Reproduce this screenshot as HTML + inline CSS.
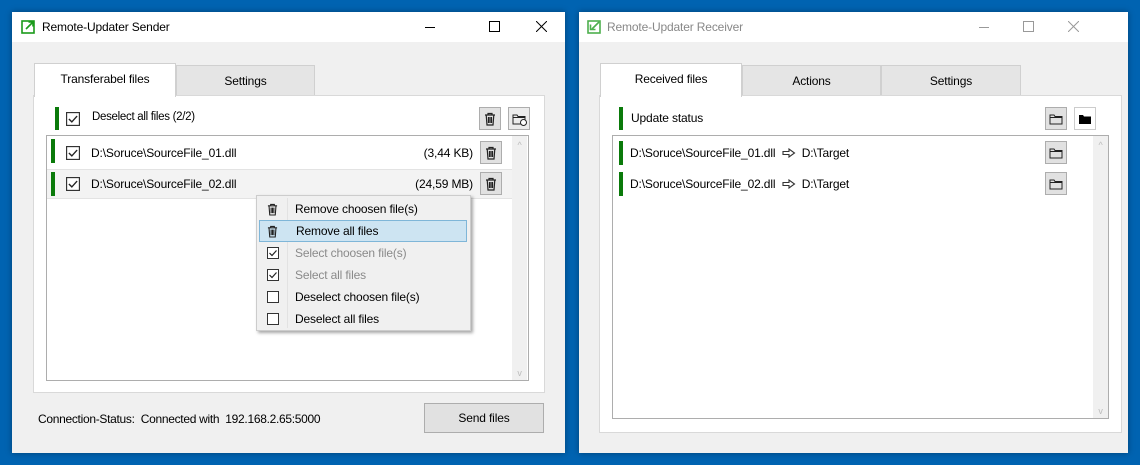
<!DOCTYPE html>
<html><head><meta charset="utf-8"><style>
*{margin:0;padding:0;box-sizing:border-box}
body{width:1140px;height:465px;background:#0063b1;position:relative;overflow:hidden;font-family:"Liberation Sans",sans-serif;font-size:12px;color:#000;letter-spacing:-0.15px}
.a{position:absolute}
.win{position:absolute;background:#f0f0f0;box-shadow:0 0 6px rgba(0,0,0,.35)}
.tb{position:absolute;left:0;top:0;right:0;height:30px;background:#fff}
.tab{position:absolute;border:1px solid #d0d0d0;text-align:center;line-height:30px;font-size:12px}
.panel{position:absolute;background:#fff;border:1px solid #d9d9d9}
.list{position:absolute;background:#fff;border:1px solid #adadad}
.gb{position:absolute;width:4px;background:#0a7a0a}
.btn{position:absolute;width:22px;height:23px;background:#e1e1e1;border:1px solid #adadad}
.sb{position:absolute;width:15px;background:#f0f0f0;color:#bbb;font-size:9px;text-align:center}
.mi{position:absolute;left:2px;width:208px;height:22px;line-height:22px;padding-left:36px;font-size:12px}
.mi .ic{position:absolute;left:8px;top:5px}
</style></head><body>
<svg width="0" height="0" style="position:absolute"><defs>
<symbol id="trash" viewBox="0 0 12 14"><path d="M1 3h10M4 3V1.5h4V3M2.2 3l.8 10h6l.8-10M4.5 5v6M6 5v6M7.5 5v6" fill="none" stroke="#222" stroke-width="1.2"/></symbol>
<symbol id="fold" viewBox="0 0 14 12"><path d="M1 2h4l1 1.5h7V11H1z" fill="none" stroke="#222" stroke-width="1"/><path d="M1 4.5h12" stroke="#222" stroke-width="1"/></symbol>
<symbol id="foldf" viewBox="0 0 14 12"><path d="M1 2h4l1 1.5h7V11H1z" fill="#000"/></symbol>
<symbol id="cbx" viewBox="0 0 12 12"><rect x=".5" y=".5" width="11" height="11" fill="#fff" stroke="#333"/></symbol>
<symbol id="cbc" viewBox="0 0 12 12"><rect x=".5" y=".5" width="11" height="11" fill="#fff" stroke="#333"/><path d="M2.5 6l2.5 2.5 4.5-5" fill="none" stroke="#222" stroke-width="1.2"/></symbol>
<symbol id="arr" viewBox="0 0 14 10"><path d="M1 3.5h6V1l5.5 4L7 9V6.5H1z" fill="#fff" stroke="#333" stroke-width="1.1"/></symbol>
</defs></svg>

<!-- LEFT WINDOW -->
<div class="win" style="left:12px;top:12px;width:553px;height:441px">
 <div class="tb">
  <svg class="a" style="left:9px;top:8px" width="14" height="14" viewBox="0 0 14 14"><rect x="1" y="1" width="12" height="12" fill="none" stroke="#1a9a1a" stroke-width="1.6"/><path d="M5 9L12 2M7.5 2H12V6.5" fill="none" stroke="#1a9a1a" stroke-width="1.6"/></svg>
  <div class="a" style="left:30px;top:8px;font-size:12px">Remote-Updater Sender</div>
  <div class="a" style="left:413px;top:15px;width:10px;height:1px;background:#000"></div>
  <div class="a" style="left:477px;top:9px;width:11px;height:11px;border:1px solid #000"></div>
  <svg class="a" style="left:524px;top:9px" width="11" height="11"><path d="M0 0L11 11M11 0L0 11" stroke="#000" stroke-width="1"/></svg>
 </div>
 <div class="tab" style="left:22px;top:51px;width:142px;height:34px;background:#fff;border-bottom:none;z-index:2">Transferabel files</div>
 <div class="tab" style="left:164px;top:53px;width:139px;height:31px;background:#e5e5e5">Settings</div>
 <div class="panel" style="left:21px;top:83px;width:512px;height:298px"></div>
 <div class="gb" style="left:43px;top:95px;height:23px"></div>
 <svg class="a" style="left:54px;top:100px" width="14" height="14"><use href="#cbc"/></svg>
 <div class="a" style="left:80px;top:99px;font-size:11.5px;letter-spacing:-0.3px">Deselect all files (2/2)</div>
 <div class="btn" style="left:467px;top:95px"><svg class="a" style="left:4px;top:4px" width="12" height="14"><use href="#trash"/></svg></div>
 <div class="btn" style="left:496px;top:95px;background:#ececec"><svg class="a" style="left:3px;top:5px" width="14" height="12"><use href="#fold"/></svg><div class="a" style="left:11px;top:11px;width:7px;height:7px;border:1px solid #222;border-radius:50%;background:#fff"></div></div>
 <div class="list" style="left:34px;top:123px;width:483px;height:246px"></div>
 <div class="sb" style="left:500px;top:124px;height:244px"><div style="margin-top:4px">^</div><div style="position:absolute;bottom:2px;width:15px">v</div></div>
 <div class="gb" style="left:39px;top:127px;height:24px"></div>
 <svg class="a" style="left:54px;top:134px" width="14" height="14"><use href="#cbc"/></svg>
 <div class="a" style="left:79px;top:134px">D:\Soruce\SourceFile_01.dll</div>
 <div class="a" style="left:400px;top:134px;width:61px;text-align:right">(3,44 KB)</div>
 <div class="btn" style="left:468px;top:129px"><svg class="a" style="left:4px;top:4px" width="12" height="14"><use href="#trash"/></svg></div>
 <div class="a" style="left:35px;top:157px;width:465px;height:30px;background:#f3f3f3;border-top:1px solid #e3e3e3;border-bottom:1px solid #e3e3e3"></div>
 <div class="gb" style="left:39px;top:160px;height:24px"></div>
 <svg class="a" style="left:54px;top:165px" width="14" height="14"><use href="#cbc"/></svg>
 <div class="a" style="left:79px;top:165px">D:\Soruce\SourceFile_02.dll</div>
 <div class="a" style="left:390px;top:165px;width:71px;text-align:right">(24,59 MB)</div>
 <div class="btn" style="left:468px;top:160px"><svg class="a" style="left:4px;top:4px" width="12" height="14"><use href="#trash"/></svg></div>
 <div class="a" style="left:26px;top:400px;letter-spacing:-0.3px">Connection-Status:&nbsp; Connected with &nbsp;192.168.2.65:5000</div>
 <div class="a" style="left:412px;top:391px;width:120px;height:30px;background:#e1e1e1;border:1px solid #adadad;text-align:center;line-height:28px">Send files</div>
 <!-- context menu -->
 <div class="a" style="left:244px;top:183px;width:215px;height:136px;background:#f0f0f0;border:1px solid #ccc;box-shadow:2px 2px 3px rgba(0,0,0,.35)">
  <div class="a" style="left:30px;top:2px;width:1px;height:130px;background:#e2e2e2"></div>
  <div class="mi" style="top:2px"><svg class="ic" width="11" height="13"><use href="#trash"/></svg>Remove choosen file(s)</div>
  <div class="mi" style="top:24px;background:#cde4f2;border:1px solid #7fb6d8;line-height:20px"><svg class="ic" style="left:7px;top:4px" width="11" height="13"><use href="#trash"/></svg>Remove all files</div>
  <div class="mi" style="top:46px;color:#8a8a8a"><svg class="ic" width="12" height="12"><use href="#cbc"/></svg>Select choosen file(s)</div>
  <div class="mi" style="top:68px;color:#8a8a8a"><svg class="ic" width="12" height="12"><use href="#cbc"/></svg>Select all files</div>
  <div class="mi" style="top:90px"><svg class="ic" width="12" height="12"><use href="#cbx"/></svg>Deselect choosen file(s)</div>
  <div class="mi" style="top:112px"><svg class="ic" width="12" height="12"><use href="#cbx"/></svg>Deselect all files</div>
 </div>
</div>

<!-- RIGHT WINDOW -->
<div class="win" style="left:579px;top:12px;width:549px;height:441px">
 <div class="tb">
  <svg class="a" style="left:8px;top:8px" width="14" height="14" viewBox="0 0 14 14"><rect x="1" y="1" width="12" height="12" fill="none" stroke="#4caf4c" stroke-width="1.6"/><path d="M12 2L5 9M3.5 4.5V9.5H8.5" fill="none" stroke="#4caf4c" stroke-width="1.6"/></svg>
  <div class="a" style="left:28px;top:8px;color:#888">Remote-Updater Receiver</div>
  <div class="a" style="left:400px;top:15px;width:10px;height:1px;background:#999"></div>
  <div class="a" style="left:444px;top:9px;width:11px;height:11px;border:1px solid #999"></div>
  <svg class="a" style="left:489px;top:9px" width="11" height="11"><path d="M0 0L11 11M11 0L0 11" stroke="#999" stroke-width="1"/></svg>
 </div>
 <div class="tab" style="left:21px;top:51px;width:142px;height:34px;background:#fff;border-bottom:none;z-index:2">Received files</div>
 <div class="tab" style="left:163px;top:53px;width:139px;height:31px;background:#e5e5e5">Actions</div>
 <div class="tab" style="left:302px;top:53px;width:140px;height:31px;background:#e5e5e5">Settings</div>
 <div class="panel" style="left:20px;top:83px;width:523px;height:338px"></div>
 <div class="gb" style="left:40px;top:95px;height:23px"></div>
 <div class="a" style="left:52px;top:99px">Update status</div>
 <div class="btn" style="left:466px;top:95px"><svg class="a" style="left:3px;top:5px" width="14" height="12"><use href="#fold"/></svg></div>
 <div class="btn" style="left:495px;top:95px;background:#fff;border-color:#ccc"><svg class="a" style="left:3px;top:5px" width="14" height="12"><use href="#foldf"/></svg></div>
 <div class="list" style="left:33px;top:123px;width:497px;height:284px"></div>
 <div class="sb" style="left:514px;top:124px;height:282px"><div style="margin-top:4px">^</div><div style="position:absolute;bottom:2px;width:15px">v</div></div>
 <div class="gb" style="left:40px;top:129px;height:24px"></div>
 <div class="a" style="left:51px;top:134px">D:\Soruce\SourceFile_01.dll <svg width="14" height="10" style="vertical-align:-1px;margin:0 3px"><use href="#arr"/></svg> D:\Target</div>
 <div class="btn" style="left:466px;top:129px"><svg class="a" style="left:3px;top:5px" width="14" height="12"><use href="#fold"/></svg></div>
 <div class="gb" style="left:40px;top:160px;height:24px"></div>
 <div class="a" style="left:51px;top:165px">D:\Soruce\SourceFile_02.dll <svg width="14" height="10" style="vertical-align:-1px;margin:0 3px"><use href="#arr"/></svg> D:\Target</div>
 <div class="btn" style="left:466px;top:160px"><svg class="a" style="left:3px;top:5px" width="14" height="12"><use href="#fold"/></svg></div>
</div>
</body></html>
